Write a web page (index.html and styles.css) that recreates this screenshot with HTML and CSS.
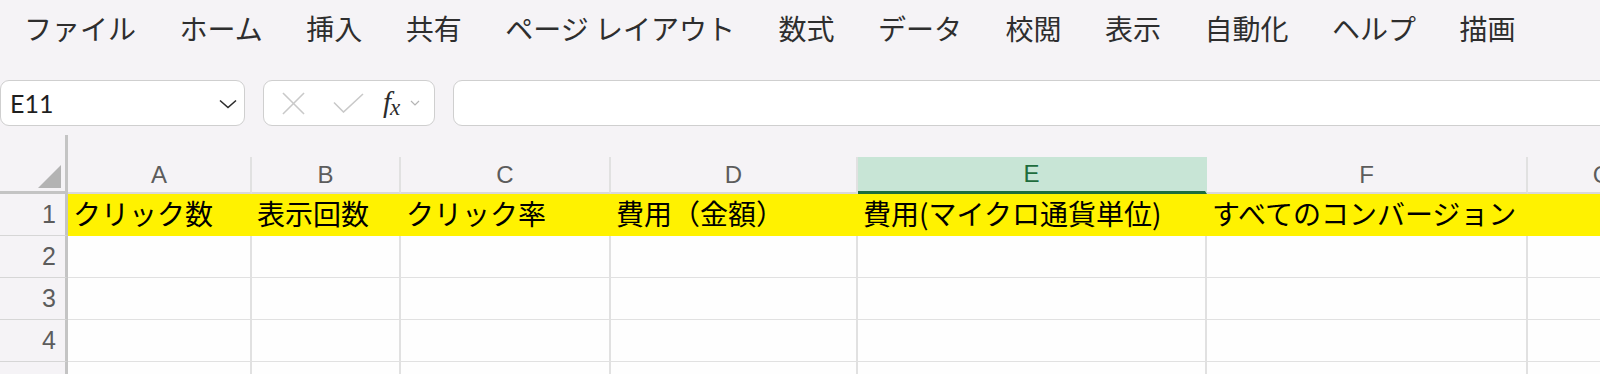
FILE: index.html
```html
<!DOCTYPE html>
<html lang="ja">

<head>
	<meta charset="UTF-8">
	<meta name="viewport" content="width=device-width, initial-scale=1.0">
	<title>Book1 - Excel</title>
	<link rel="stylesheet" href="styles.css">
</head>

<body>
	<nav class="menu">
		<span class="menu-item">ファイル</span>
		<span class="menu-item">ホーム</span>
		<span class="menu-item">挿入</span>
		<span class="menu-item">共有</span>
		<span class="menu-item">ページ レイアウト</span>
		<span class="menu-item">数式</span>
		<span class="menu-item">データ</span>
		<span class="menu-item">校閲</span>
		<span class="menu-item">表示</span>
		<span class="menu-item">自動化</span>
		<span class="menu-item">ヘルプ</span>
		<span class="menu-item">描画</span>
	</nav>

	<div class="formula-bar">
		<div class="name-box">
			<span class="cell-ref">E11</span>
			<svg class="chevron" viewBox="0 0 18 10">
				<path d="M1 1.5l8 7 8-7" fill="none" stroke="#2b2b2b" stroke-width="1.6" />
			</svg>
		</div>
		<div class="fx-box">
			<svg class="icon-cancel" viewBox="0 0 24 24">
				<path d="M1 1l22 22M23 1L1 23" fill="none" stroke="#c9c9c9" stroke-width="1.6" />
			</svg>
			<svg class="icon-enter" viewBox="0 0 31 20">
				<path d="M1 9.5l9.5 9.5L30 1" fill="none" stroke="#c9c9c9" stroke-width="1.6" />
			</svg>
			<span class="fx"><i>f</i><sub>x</sub></span>
			<svg class="chevron-small" viewBox="0 0 10 6">
				<path d="M1 1l4 4 4-4" fill="none" stroke="#b5b5b5" stroke-width="1.2" />
			</svg>
		</div>
		<div class="formula-input"></div>
	</div>

	<div class="sheet">
		<div class="row header-row">
			<div class="corner"><span class="corner-mark"></span></div>
			<div class="col-head col-a">A</div>
			<div class="col-head col-b">B</div>
			<div class="col-head col-c">C</div>
			<div class="col-head col-d">D</div>
			<div class="col-head col-e selected">E</div>
			<div class="col-head col-f">F</div>
			<div class="col-head col-g">G</div>
		</div>
		<div class="row filled">
			<div class="row-head">1</div>
			<div class="cells">
				<div class="cell col-a">クリック数</div>
				<div class="cell col-b">表示回数</div>
				<div class="cell col-c">クリック率</div>
				<div class="cell col-d">費用（金額）</div>
				<div class="cell col-e">費用(マイクロ通貨単位)</div>
				<div class="cell col-f">すべてのコンバージョン</div>
				<div class="cell col-g"></div>
			</div>
		</div>
		<div class="row">
			<div class="row-head">2</div>
			<div class="cells">
				<div class="cell col-a"></div>
				<div class="cell col-b"></div>
				<div class="cell col-c"></div>
				<div class="cell col-d"></div>
				<div class="cell col-e"></div>
				<div class="cell col-f"></div>
				<div class="cell col-g"></div>
			</div>
		</div>
		<div class="row">
			<div class="row-head">3</div>
			<div class="cells">
				<div class="cell col-a"></div>
				<div class="cell col-b"></div>
				<div class="cell col-c"></div>
				<div class="cell col-d"></div>
				<div class="cell col-e"></div>
				<div class="cell col-f"></div>
				<div class="cell col-g"></div>
			</div>
		</div>
		<div class="row">
			<div class="row-head">4</div>
			<div class="cells">
				<div class="cell col-a"></div>
				<div class="cell col-b"></div>
				<div class="cell col-c"></div>
				<div class="cell col-d"></div>
				<div class="cell col-e"></div>
				<div class="cell col-f"></div>
				<div class="cell col-g"></div>
			</div>
		</div>
		<!-- next row is only partly on screen, its number falls below the edge -->
		<div class="row">
			<div class="row-head"></div>
			<div class="cells">
				<div class="cell col-a"></div>
				<div class="cell col-b"></div>
				<div class="cell col-c"></div>
				<div class="cell col-d"></div>
				<div class="cell col-e"></div>
				<div class="cell col-f"></div>
				<div class="cell col-g"></div>
			</div>
		</div>
	</div>
</body>

</html>
```

FILE: styles.css
```css
* {
	margin: 0;
	padding: 0;
	box-sizing: border-box;
}

:root {
	--background: #f5f3f6;
	--cell-bg: #fefefe;
	--text: #000;
	--menu-text: #2e2e2e;
	--header-text: #5c5c5c;
	--grid: #e1e1e1;
	--frame: #c4c4c4;
	--box-border: #cfcfcf;
	--fill: #fff200;
	--selected-bg: #c8e5d6;
	--selected-line: #1e6c3d;
}

body {
	width: 1600px;
	height: 374px;
	overflow: hidden;
	background: var(--background);
	color: var(--text);
	font-family: "Noto Sans CJK JP", "Noto Sans", sans-serif;
}

/* menu */

.menu {
	display: flex;
	align-items: center;
	gap: 43.5px;
	height: 56px;
	padding-left: 24px;
	font-size: 28px;
	color: var(--menu-text);
	white-space: nowrap;
}

/* formula bar */

.formula-bar {
	display: flex;
	gap: 18px;
	height: 46px;
	margin-top: 24px;
}

.name-box,
.fx-box,
.formula-input {
	display: flex;
	align-items: center;
	background: #fff;
	border: 1.5px solid var(--box-border);
	border-radius: 9px;
}

.name-box {
	width: 245px;
	padding: 0 7px 0 9px;
	justify-content: space-between;
}

.cell-ref {
	font-family: Lato, "Liberation Sans", sans-serif;
	font-size: 25px;
	color: #1f1f1f;
}

.chevron {
	width: 18px;
	height: 10px;
	margin-top: 2px;
}

.fx-box {
	width: 172px;
	padding-left: 18px;
}

.icon-cancel {
	width: 23px;
	height: 23px;
}

.icon-enter {
	width: 31px;
	height: 20px;
	margin-left: 28px;
}

.fx {
	margin-left: 19px;
	font-family: "Liberation Serif", serif;
	color: #2b2b2b;
	line-height: 1;
}

.fx i {
	font-size: 29px;
}

.fx sub {
	font-size: 23px;
	font-style: italic;
	vertical-align: -3px;
	margin-left: -1px;
}

.chevron-small {
	width: 10px;
	height: 6px;
	margin-left: 10px;
}

.formula-input {
	flex: 1;
	margin-right: -20px;
}

/* sheet */

.sheet {
	margin-top: 9px;
}

.row {
	display: flex;
	height: 42px;
}

.header-row {
	height: 59px;
	align-items: flex-end;
}

.corner {
	flex: none;
	display: flex;
	align-items: flex-end;
	justify-content: flex-end;
	width: 68px;
	height: 59px;
	padding: 0 4px 3px 0;
	border-right: 3px solid var(--frame);
	border-bottom: 3px solid var(--frame);
}

.corner-mark {
	width: 0;
	height: 0;
	border-left: 23px solid transparent;
	border-bottom: 23px solid #b3b3b3;
}

.col-head {
	flex: none;
	display: flex;
	align-items: center;
	justify-content: center;
	height: 37px;
	border-right: 2px solid var(--grid);
	border-bottom: 2px solid #d9d9d9;
	font-family: "Liberation Sans", sans-serif;
	font-size: 24px;
	color: var(--header-text);
}

.col-head.selected {
	background: var(--selected-bg);
	border-right-color: var(--selected-bg);
	border-bottom: 3px solid var(--selected-line);
	color: var(--selected-line);
}

.col-a { width: 184px; }
.col-b { width: 149px; }
.col-c { width: 210px; }
.col-d { width: 247px; }
.col-e { width: 349px; }
.col-f { width: 321px; }
.col-g { width: 150px; }

.row-head {
	flex: none;
	display: flex;
	align-items: center;
	justify-content: flex-end;
	width: 68px;
	padding-right: 9px;
	border-right: 3px solid var(--frame);
	border-bottom: 1px solid #d6d6d6;
	font-family: "Liberation Sans", sans-serif;
	font-size: 25px;
	color: var(--header-text);
}

.cells {
	flex: none;
	display: flex;
	background: var(--cell-bg);
}

.cell {
	flex: none;
	display: flex;
	align-items: center;
	padding-left: 5px;
	border-right: 2px solid var(--grid);
	border-bottom: 1px solid var(--grid);
	font-size: 28px;
	white-space: nowrap;
	overflow: visible;
}

.filled .cells {
	background: var(--fill);
}

.filled .cell {
	border-color: transparent;
	padding-bottom: 3px;
}
```
